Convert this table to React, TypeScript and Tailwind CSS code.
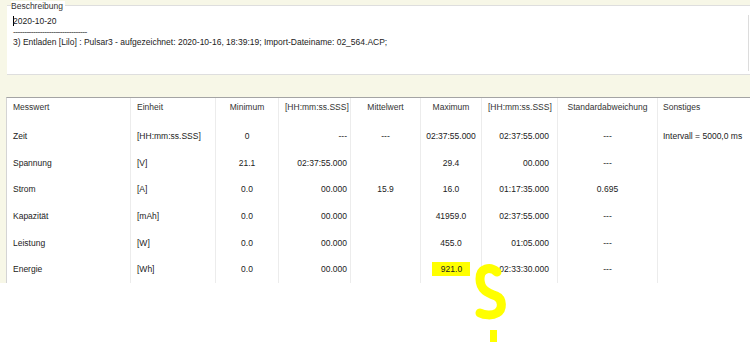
import React from 'react';

type Row = {
  name: string;
  unit: string;
  min: string;
  minAt: string;
  avg: string;
  max: string;
  maxAt: string;
  std: string;
  other: string;
  mark?: boolean;
};

const rows: Row[] = [
  { name: 'Zeit', unit: '[HH:mm:ss.SSS]', min: '0', minAt: '---', avg: '---', max: '02:37:55.000', maxAt: '02:37:55.000', std: '---', other: 'Intervall = 5000,0 ms' },
  { name: 'Spannung', unit: '[V]', min: '21.1', minAt: '02:37:55.000', avg: '', max: '29.4', maxAt: '00.000', std: '---', other: '' },
  { name: 'Strom', unit: '[A]', min: '0.0', minAt: '00.000', avg: '15.9', max: '16.0', maxAt: '01:17:35.000', std: '0.695', other: '' },
  { name: 'Kapazität', unit: '[mAh]', min: '0.0', minAt: '00.000', avg: '', max: '41959.0', maxAt: '02:37:55.000', std: '---', other: '' },
  { name: 'Leistung', unit: '[W]', min: '0.0', minAt: '00.000', avg: '', max: '455.0', maxAt: '01:05.000', std: '---', other: '' },
  { name: 'Energie', unit: '[Wh]', min: '0.0', minAt: '00.000', avg: '', max: '921.0', maxAt: '02:33:30.000', std: '---', other: '', mark: true },
];

const cols = 'grid grid-cols-[124px_85px_63px_72px_70px_61px_76px_100px_1fr]';
const cell = 'border-r border-[#ececec] px-[6px]';

export default function App() {
  return (
    <div className="relative w-[750px] h-[342px] overflow-hidden bg-white font-['Liberation_Sans',Arial,sans-serif] text-[8.5px] text-[#222]">
      {/* Beschreibung group */}
      <div className="bg-[#f7f7e7] pt-[5px] pl-[7px] h-[97px]">
        <div className="relative bg-white border-t border-[#dedede] border-b h-[70px] pr-[1px] flex">
          <span className="absolute left-[4px] -top-[5px] bg-white pr-[2px] leading-[10px] text-[#333]">Beschreibung</span>
          <div className="flex-1 pt-[10px] pl-[6px] leading-[10.5px]">
            <div className="flex items-center">
              <span className="w-px h-[10px] bg-black -mr-px" />
              <span>2020-10-20</span>
            </div>
            <div className="tracking-[-0.6px] text-[#444]">---------------------------------</div>
            <div>3) Entladen [Lilo] :  Pulsar3 - aufgezeichnet: 2020-10-16, 18:39:19; Import-Dateiname: 02_564.ACP;</div>
          </div>
          <div className="w-px bg-[#dcdcdc] mt-[9px] mb-[3px]" />
        </div>
      </div>

      {/* Table */}
      <div className="flex bg-white">
        <div className="w-[6px] h-[186px] bg-[#f7f7e7]" />
        <div className="flex-1 border-t border-[#a4a4a4] border-l border-l-[#d4d4d4] h-[186px]">
          <div className={`${cols} h-[25px] leading-[10px] text-[#333]`}>
            <div className={`${cell} pt-[4px]`}>Messwert</div>
            <div className={`${cell} pt-[4px]`}>Einheit</div>
            <div className={`${cell} pt-[4px] text-center`}>Minimum</div>
            <div className={`${cell} pt-[4px] text-center`}>[HH:mm:ss.SSS]</div>
            <div className={`${cell} pt-[4px] text-center`}>Mittelwert</div>
            <div className={`${cell} pt-[4px] text-center`}>Maximum</div>
            <div className={`${cell} pt-[4px] text-center`}>[HH:mm:ss.SSS]</div>
            <div className={`${cell} pt-[4px] text-center`}>Standardabweichung</div>
            <div className="px-[5px] pt-[4px]">Sonstiges</div>
          </div>
          {rows.map((r) => (
            <div key={r.name} className={`${cols} h-[26.6px] items-stretch leading-[10px]`}>
              <div className={`${cell} flex items-center`}>{r.name}</div>
              <div className={`${cell} flex items-center`}>{r.unit}</div>
              <div className={`${cell} flex items-center justify-center`}>{r.min}</div>
              <div className={`${cell} flex items-center justify-end pr-[3px]`}>{r.minAt}</div>
              <div className={`${cell} flex items-center justify-center`}>{r.avg}</div>
              <div className={`${cell} flex items-center justify-center`}>
                {r.mark ? (
                  <span className="bg-[#ffff00] pl-[9px] pr-[8px] py-[2px]">{r.max}</span>
                ) : (
                  r.max
                )}
              </div>
              <div className={`${cell} flex items-center justify-end pr-[8px]`}>{r.maxAt}</div>
              <div className={`${cell} flex items-center justify-center`}>{r.std}</div>
              <div className="px-[5px] flex items-center">{r.other}</div>
            </div>
          ))}
        </div>
      </div>

      {/* yellow hand-drawn mark */}
      <svg className="absolute left-0 top-0 pointer-events-none" width="750" height="342" viewBox="0 0 750 342">
        <path
          d="M497 272 C 490 266, 480 268, 480 279 C 480 290, 488 293, 496 296 C 503 299, 503 310, 497 313 C 492 316, 484 315, 480 313"
          fill="none"
          stroke="#ffff00"
          strokeWidth="9"
          strokeLinecap="round"
          strokeLinejoin="round"
        />
        <rect x="490" y="330" width="7" height="14" fill="#ffff00" />
      </svg>
    </div>
  );
}
